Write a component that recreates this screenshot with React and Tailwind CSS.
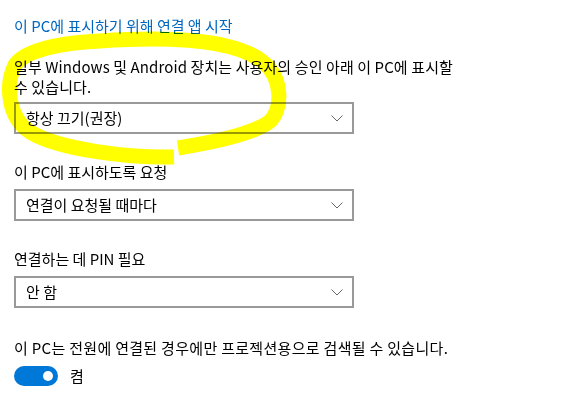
import React from "react";

function Chevron() {
  return (
    <svg width="12" height="7" viewBox="0 0 12 7" className="shrink-0">
      <path d="M0.5 0.5 L6 6 L11.5 0.5" fill="none" stroke="#666666" strokeWidth="1" />
    </svg>
  );
}

function Dropdown({ value, className = "" }) {
  return (
    <div
      className={
        "flex h-[32px] w-[340px] items-center justify-between border-2 border-[#999999] pl-[10px] pr-[9px] " +
        className
      }
    >
      <span className="leading-5">{value}</span>
      <Chevron />
    </div>
  );
}

export default function App() {
  return (
    <div
      className="relative h-[400px] w-[567px] overflow-hidden bg-white text-[15px] text-black"
      style={{ fontFamily: '"Noto Sans CJK KR", "Noto Sans", sans-serif' }}
    >
      <div className="flex flex-col items-start pl-[14px] pt-[16px]">
        <div className="leading-5 text-[#0067c0]">이 PC에 표시하기 위해 연결 앱 시작</div>
        <p className="mt-[21px] leading-5 tracking-[0.1px]">
          일부 Windows 및 Android 장치는 사용자의 승인 아래 이 PC에 표시할
          <br />
          수 있습니다.
        </p>
        <Dropdown value="항상 끄기(권장)" className="mt-[5px]" />
        <div className="mt-[28px] leading-5">이 PC에 표시하도록 요청</div>
        <Dropdown value="연결이 요청될 때마다" className="mt-[7px]" />
        <div className="mt-[28px] leading-5">연결하는 데 PIN 필요</div>
        <Dropdown value="안 함" className="mt-[7px]" />
        <div className="mt-[30px] leading-5 tracking-[0.3px]">
          이 PC는 전원에 연결된 경우에만 프로젝션용으로 검색될 수 있습니다.
        </div>
        <div className="mt-[8px] flex items-center gap-[12px]">
          <div className="flex h-[20px] w-[44px] items-center justify-end rounded-full bg-[#0078d7] pr-[5px]">
            <div className="h-[10px] w-[10px] rounded-full bg-white" />
          </div>
          <span className="leading-5">켬</span>
        </div>
      </div>

      <svg
        className="pointer-events-none absolute inset-0 mix-blend-multiply"
        width="567"
        height="400"
        viewBox="0 0 567 400"
      >
        <path
          d="M174,157 C130,158 60,150 30,132 C8,118 5,85 15,65 C25,50 60,43 100,41 C160,37 232,37 263,62 C283,78 283,110 269,122 C251,135 210,143 178,148"
          fill="none"
          stroke="#ffff00"
          strokeWidth="15"
          strokeLinecap="butt"
        />
      </svg>
    </div>
  );
}
